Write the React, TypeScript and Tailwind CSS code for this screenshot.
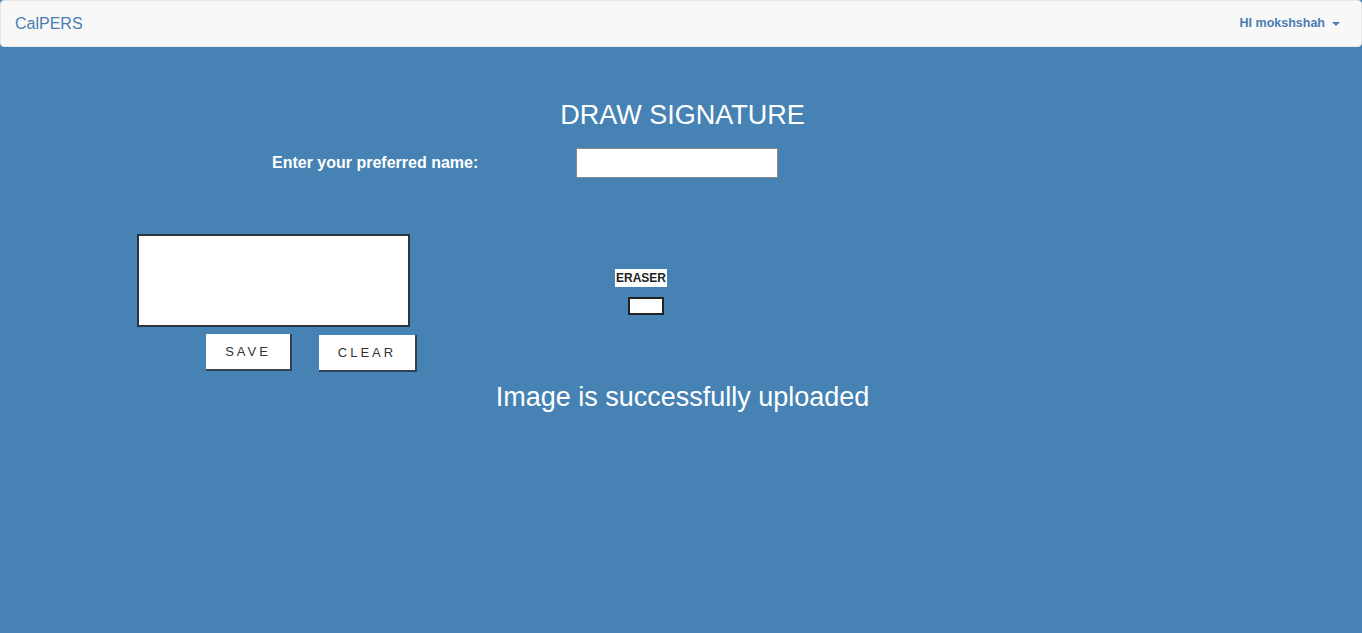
export default function App() {
  return (
    <div className="min-h-[633px] bg-[#4682b4] font-['Liberation_Sans',Arial,sans-serif]">
      <nav className="flex h-[47px] items-center justify-between rounded-[4px] border border-[#e7e7e7] bg-[#f8f8f8] px-[14px]">
        <span className="text-[16px] text-[#4a7db0]">CalPERS</span>
        <span className="flex items-center gap-[7px] pr-[7px] text-[12.5px] font-bold text-[#4a7db0]">
          HI mokshshah
          <span className="inline-block h-0 w-0 border-x-[4px] border-t-[4px] border-x-transparent border-t-[#4a7db0]" />
        </span>
      </nav>

      <h1 className="mt-[52px] pl-[3px] text-center text-[27px] leading-[32px] text-white">DRAW SIGNATURE</h1>

      <div className="mt-[17px] flex items-center">
        <label className="ml-[272px] w-[304px] text-[16px] font-bold text-white">Enter your preferred name:</label>
        <input className="h-[30px] w-[202px] border border-[#8a8a8a] bg-white" />
      </div>

      <div className="mt-[56px] flex">
        <div className="ml-[137px] w-[282px]">
          <div className="h-[93px] w-[273px] border-2 border-[#2a3540] bg-white" />
          <div className="mt-[7px] flex items-start">
            <button className="ml-[69px] h-[37px] w-[86px] border-r-2 border-b-2 border-[#2f4254] bg-white text-[13px] tracking-[3px] text-[#333]">SAVE</button>
            <button className="ml-[27px] mt-[1px] h-[37px] w-[98px] border-r-2 border-b-2 border-[#2f4254] bg-white text-[13px] tracking-[3px] text-[#333]">CLEAR</button>
          </div>
        </div>
        <div className="ml-[196px] mt-[35px] flex flex-col items-start">
          <span className="bg-white px-[1px] text-[12px] font-bold leading-[18px] text-[#222]">ERASER</span>
          <span className="ml-[13px] mt-[10px] h-[18px] w-[36px] border-2 border-[#222] bg-white" />
        </div>
      </div>

      <p className="mt-[9px] pl-[3px] text-center text-[27px] leading-[32px] text-white">Image is successfully uploaded</p>
    </div>
  );
}
